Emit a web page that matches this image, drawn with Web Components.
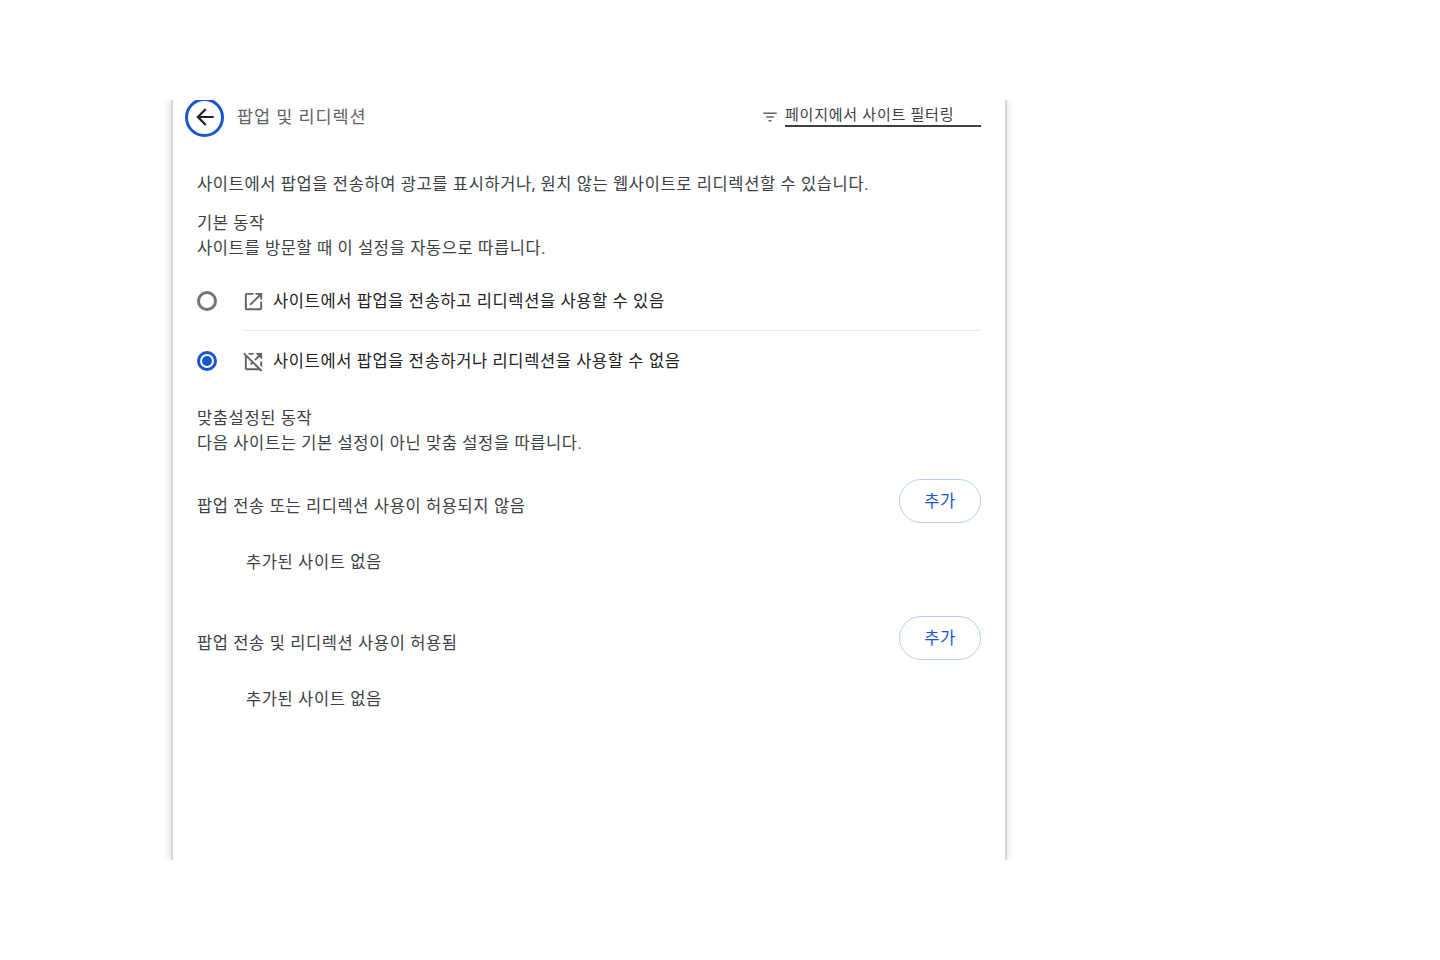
<!DOCTYPE html>
<html lang="ko">
<head>
<meta charset="utf-8">
<title>팝업 및 리디렉션</title>
<style>
  html, body { margin: 0; padding: 0; background: #fff; }
  body { font-family: Roboto, "Noto Sans CJK KR", sans-serif; color: #3c4043; letter-spacing: .62px; }
</style>
</head>
<body>
<settings-page>
  <page-header title="팝업 및 리디렉션" filter="페이지에서 사이트 필터링"></page-header>
  <page-text style="margin-top:38px">사이트에서 팝업을 전송하여 광고를 표시하거나, 원치 않는 웹사이트로 리디렉션할 수 있습니다.</page-text>
  <page-text style="margin-top:14px">기본 동작</page-text>
  <page-text>사이트를 방문할 때 이 설정을 자동으로 따릅니다.</page-text>
  <radio-row icon="allow" style="margin-top:9px">사이트에서 팝업을 전송하고 리디렉션을 사용할 수 있음</radio-row>
  <radio-row icon="block" checked divided>사이트에서 팝업을 전송하거나 리디렉션을 사용할 수 없음</radio-row>
  <page-text style="margin-top:16px">맞춤설정된 동작</page-text>
  <page-text>다음 사이트는 기본 설정이 아닌 맞춤 설정을 따릅니다.</page-text>
  <site-list heading="팝업 전송 또는 리디렉션 사용이 허용되지 않음" style="margin-top:23px"></site-list>
  <site-list heading="팝업 전송 및 리디렉션 사용이 허용됨" style="margin-top:16px"></site-list>
</settings-page>

<script>
const pageTemplate = document.createElement('template');
pageTemplate.innerHTML = `
<style>
  :host{
    display: block;
    width: 860px;
    height: 760px;
    margin: 100px 0 0 160px;
    overflow: hidden;
  }
  .card{
    box-sizing: border-box;
    width: 836px;
    height: 760px;
    margin-left: 11px;
    padding: 0 24px;
    background: #fff;
    border-left: 2px solid #d6d6d6;
    border-right: 2px solid #d6d6d6;
    box-shadow: 0 0 8px rgba(60,64,67,.22);
  }
</style>
<div class="card"><slot></slot></div>
`;

class SettingsPage extends HTMLElement {
  constructor() {
    super();
    this.attachShadow({ mode: 'open' }).appendChild(pageTemplate.content.cloneNode(true));
  }
}
customElements.define('settings-page', SettingsPage);

const headerTemplate = document.createElement('template');
headerTemplate.innerHTML = `
<style>
  :host{
    display: flex;
    align-items: center;
    height: 34px;
    margin-left: -12px;
    font-size: 17.5px;
    letter-spacing: .9px;
    color: #5f6368;
  }
  .back{
    flex: none;
    width: 33px;
    height: 33px;
    margin: 0 13px 0 0;
    border: 3px solid #1558d6;
    border-radius: 50%;
    display: flex;
    align-items: center;
    justify-content: center;
  }
  .title{ flex: auto; padding-bottom: 4px; }
  .filterIcon{ flex: none; width: 18px; height: 18px; margin: 0 6px 0 0; }
  .filter{
    flex: none;
    box-sizing: border-box;
    width: 196px;
    height: 23px;
    margin-bottom: 4px;
    line-height: 23px;
    font-size: 15px;
    letter-spacing: .77px;
    color: #3c4043;
    border-bottom: 2px solid #3c4043;
  }
</style>
<div class="back">
  <svg width="26" height="26" viewBox="0 0 24 24"><path fill="#202124" d="M20 11H7.83l5.59-5.59L12 4l-8 8 8 8 1.41-1.41L7.83 13H20z"/></svg>
</div>
<div class="title"></div>
<svg class="filterIcon" viewBox="0 0 24 24"><path fill="#5f6368" d="M3 6h18v2H3zM7 11h10v2H7zM10 16h4v2h-4z"/></svg>
<div class="filter"></div>
`;

class PageHeader extends HTMLElement {
  constructor() {
    super();
    this.attachShadow({ mode: 'open' }).appendChild(headerTemplate.content.cloneNode(true));
    this.shadowRoot.querySelector('.title').textContent = this.getAttribute('title');
    this.shadowRoot.querySelector('.filter').textContent = this.getAttribute('filter');
    this.removeAttribute('title');
  }
}
customElements.define('page-header', PageHeader);

const textTemplate = document.createElement('template');
textTemplate.innerHTML = `
<style>
  :host{
    display: block;
    font-size: 16.5px;
    line-height: 25px;
    color: #3c4043;
    white-space: nowrap;
  }
</style>
<slot></slot>
`;

class PageText extends HTMLElement {
  constructor() {
    super();
    this.attachShadow({ mode: 'open' }).appendChild(textTemplate.content.cloneNode(true));
  }
}
customElements.define('page-text', PageText);

const radioTemplate = document.createElement('template');
radioTemplate.innerHTML = `
<style>
  :host{
    display: flex;
    align-items: center;
    height: 60px;
    font-size: 16.5px;
    color: #202124;
  }
  .radio{
    flex: none;
    box-sizing: border-box;
    width: 20px;
    height: 20px;
    margin: 2px 25px 0 0;
    border: 3px solid #757575;
    border-radius: 50%;
    display: flex;
    align-items: center;
    justify-content: center;
  }
  :host([checked]) .radio{ border-color: #1558d6; }
  .dot{ display: none; width: 10px; height: 10px; border-radius: 50%; background: #1558d6; }
  :host([checked]) .dot{ display: block; }
  .body{
    flex: auto;
    align-self: stretch;
    display: flex;
    align-items: center;
    box-sizing: border-box;
  }
  :host([divided]) .body{ border-top: 1px solid #e8eaed; }
  svg{ flex: none; width: 23px; height: 23px; margin: 2px 8px 0 0; }
  :host([divided]) span{ margin-top: -1px; }
</style>
<div class="radio"><div class="dot"></div></div>
<div class="body">
  <svg viewBox="0 0 24 24"></svg>
  <span><slot></slot></span>
</div>
`;

const radioIcons = {
  allow: '<path fill="#5f6368" d="M19 19H5V5h7V3H5a2 2 0 0 0-2 2v14a2 2 0 0 0 2 2h14a2 2 0 0 0 2-2v-7h-2v7zM14 3v2h3.59l-9.83 9.83 1.41 1.41L19 6.41V10h2V3h-7z"/>',
  block: '<path fill="#5f6368" d="M16.79 5.8 14 3h7v7l-2.79-2.79-4.09 4.09-1.41-1.41 4.08-4.09zM19 12v4.17l2 2V12h-2zm.78 10.61L18.17 21H5c-1.11 0-2-.9-2-2V5.83L1.39 4.22 2.8 2.81l18.38 18.38-1.4 1.42zM16.17 19l-4.88-4.88-1.46 1.46-1.41-1.41 1.46-1.46L5 7.83V19h11.17zM7.83 5H12V3H5.83l2 2z"/>'
};

class RadioRow extends HTMLElement {
  constructor() {
    super();
    this.attachShadow({ mode: 'open' }).appendChild(radioTemplate.content.cloneNode(true));
    this.shadowRoot.querySelector('svg').innerHTML = radioIcons[this.getAttribute('icon')];
  }
}
customElements.define('radio-row', RadioRow);

const listTemplate = document.createElement('template');
listTemplate.innerHTML = `
<style>
  :host{
    display: block;
    font-size: 16.5px;
    color: #3c4043;
  }
  .head{
    display: flex;
    align-items: center;
    justify-content: space-between;
    height: 44px;
  }
  .heading{ padding-top: 8px; }
  button{
    box-sizing: border-box;
    width: 82px;
    height: 44px;
    border: 1.5px solid #b9d0f8;
    border-radius: 22px;
    background: #fff;
    color: #1558d6;
    font: inherit;
    letter-spacing: inherit;
    padding: 0 0 3px;
  }
  .empty{
    margin: 27px 0 0 49px;
    height: 50px;
    line-height: 25px;
  }
</style>
<div class="head">
  <div class="heading"></div>
  <button>추가</button>
</div>
<div class="empty">추가된 사이트 없음</div>
`;

class SiteList extends HTMLElement {
  constructor() {
    super();
    this.attachShadow({ mode: 'open' }).appendChild(listTemplate.content.cloneNode(true));
    this.shadowRoot.querySelector('.heading').textContent = this.getAttribute('heading');
  }
}
customElements.define('site-list', SiteList);
</script>
</body>
</html>
